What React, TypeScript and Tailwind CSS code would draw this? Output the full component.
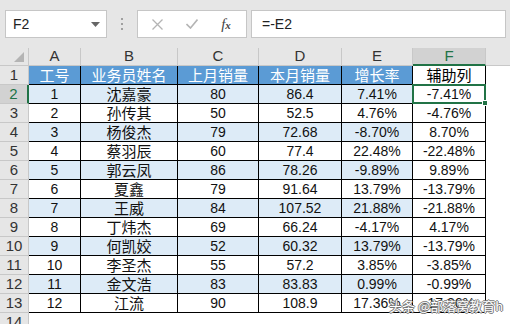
import React from "react";

const rows: [string, string, string, string, string, string][] = [
  ["1", "沈嘉豪", "80", "86.4", "7.41%", "-7.41%"],
  ["2", "孙传其", "50", "52.5", "4.76%", "-4.76%"],
  ["3", "杨俊杰", "79", "72.68", "-8.70%", "8.70%"],
  ["4", "蔡羽辰", "60", "77.4", "22.48%", "-22.48%"],
  ["5", "郭云凤", "86", "78.26", "-9.89%", "9.89%"],
  ["6", "夏鑫", "79", "91.64", "13.79%", "-13.79%"],
  ["7", "王威", "84", "107.52", "21.88%", "-21.88%"],
  ["8", "丁炜杰", "69", "66.24", "-4.17%", "4.17%"],
  ["9", "何凯姣", "52", "60.32", "13.79%", "-13.79%"],
  ["10", "李圣杰", "55", "57.2", "3.85%", "-3.85%"],
  ["11", "金文浩", "83", "83.83", "0.99%", "-0.99%"],
  ["12", "江流", "90", "108.9", "17.36%", "-17.36%"],
];

const widths = ["w-[52px]", "w-[97px]", "w-[81px]", "w-[83px]", "w-[71px]", "w-[73px]"];
const letters = ["A", "B", "C", "D", "E", "F"];
const heads = ["工号", "业务员姓名", "上月销量", "本月销量", "增长率", "辅助列"];

export default function App() {
  return (
    <div className="relative w-[510px] h-[324px] overflow-hidden bg-white font-['Liberation_Sans','Noto_Sans_CJK_SC',sans-serif] text-black">
      {/* formula bar */}
      <div className="h-[48px] bg-[#e6e6e6] flex items-start pt-[10px] pl-[5px]">
        <div className="w-[102px] h-[28px] bg-white border border-[#c6c6c6] flex items-center justify-between pl-[7px] pr-[6px]">
          <span className="text-[14px] text-[#222]">F2</span>
          <svg width="9" height="5" viewBox="0 0 9 5">
            <path d="M0 0 L9 0 L4.5 5 Z" fill="#666" />
          </svg>
        </div>
        <div className="w-[30px] h-[28px] flex flex-col items-center justify-center gap-[3px]">
          <div className="w-[2px] h-[2px] bg-[#a0a0a0]" />
          <div className="w-[2px] h-[2px] bg-[#a0a0a0]" />
          <div className="w-[2px] h-[2px] bg-[#a0a0a0]" />
        </div>
        <div className="w-[110px] h-[28px] bg-white border border-[#c6c6c6] flex items-center">
          <div className="w-[38px] flex justify-center">
            <svg width="11" height="11" viewBox="0 0 11 11">
              <path d="M0.5 0.5 L10.5 10.5 M10.5 0.5 L0.5 10.5" stroke="#b4b4b4" strokeWidth="1.3" />
            </svg>
          </div>
          <div className="w-[32px] flex justify-center">
            <svg width="12" height="10" viewBox="0 0 12 10">
              <path d="M0.5 5 L4.5 9 L11.5 0.5" stroke="#b4b4b4" strokeWidth="1.6" fill="none" />
            </svg>
          </div>
          <div className="flex-1 flex justify-center pr-[2px]">
            <span className="font-['Liberation_Serif',serif] italic text-[15px] text-[#444] leading-none">
              f<span className="text-[11px] font-bold">x</span>
            </span>
          </div>
        </div>
        <div className="ml-[4px] w-[255px] h-[28px] bg-white border border-[#c6c6c6] flex items-center pl-[10px]">
          <span className="text-[14px] text-[#222]">=-E2</span>
        </div>
      </div>

      {/* column headers */}
      <div className="flex h-[18px] bg-[#e6e6e6]">
        <div className="relative w-[29px] border-r border-b border-[#c8c8c8]">
          <svg className="absolute right-[4px] bottom-[3px]" width="10" height="10" viewBox="0 0 10 10">
            <path d="M10 0 L10 10 L0 10 Z" fill="#b4b4b4" />
          </svg>
        </div>
        {letters.map((l, i) =>
          i === 5 ? (
            <div
              key={l}
              className={`${widths[i]} bg-[#d2d2d2] border-r border-[#c8c8c8] border-b-2 border-b-[#217346] flex items-center justify-center text-[15px] text-[#217346]`}
            >
              {l}
            </div>
          ) : (
            <div
              key={l}
              className={`${widths[i]} border-r border-b border-[#c8c8c8] flex items-center justify-center text-[15px] text-[#333]`}
            >
              {l}
            </div>
          )
        )}
        <div className="flex-1 border-b border-[#c8c8c8]" />
      </div>

      {/* row 1 */}
      <div className="flex h-[19px]">
        <div className="w-[29px] bg-[#e6e6e6] border-r border-b border-[#c8c8c8] flex items-center justify-center text-[15px] text-[#333]">
          1
        </div>
        {heads.map((h, i) => (
          <div
            key={h}
            className={`${widths[i]} border-r border-b border-black flex items-center justify-center text-[15px] font-['Noto_Sans_CJK_SC',sans-serif] ${
              i === 5 ? "bg-white text-black" : "bg-[#5b9bd5] text-white"
            }`}
          >
            {h}
          </div>
        ))}
        <div className="flex-1" />
      </div>

      {/* data rows */}
      {rows.map((r, ri) => {
        const blue = ri % 2 === 0;
        const sel = ri === 0;
        return (
          <div key={ri} className="flex h-[19px]">
            <div
              className={`w-[29px] border-b border-[#c8c8c8] flex items-center justify-center text-[15px] ${
                sel
                  ? "bg-[#d2d2d2] text-[#217346] border-r-2 border-r-[#217346]"
                  : "bg-[#e6e6e6] text-[#333] border-r"
              }`}
            >
              {ri + 2}
            </div>
            {r.map((v, ci) => (
              <div
                key={ci}
                className={`${widths[ci]} relative border-r border-b border-black flex items-center justify-center ${
                  ci === 1 ? "text-[15px] font-['Noto_Sans_CJK_SC',sans-serif]" : "text-[14px]"
                } ${blue && ci < 5 ? "bg-[#ddebf7]" : "bg-white"} text-[#111]`}
              >
                {v}
                {sel && ci === 5 && (
                  <div className="absolute -top-px -left-px -right-px -bottom-px border-2 border-[#217346] z-10">
                    <div className="absolute -right-[4px] -bottom-[4px] w-[6px] h-[6px] bg-[#217346] border border-white" />
                  </div>
                )}
              </div>
            ))}
            <div className="flex-1" />
          </div>
        );
      })}

      {/* row 14 */}
      <div className="flex h-[19px]">
        <div className="w-[29px] bg-[#e6e6e6] border-r border-b border-[#c8c8c8] flex items-center justify-center text-[15px] text-[#333]">
          14
        </div>
        <div className="flex-1" />
      </div>

      {/* watermark */}
      <div className="absolute left-[389px] top-[297px] text-[13px] leading-[18px] text-white font-['Noto_Sans_CJK_SC',sans-serif] [text-shadow:1px_0_0_#777,-1px_0_0_#777,0_1px_0_#777,0_-1px_0_#777] whitespace-nowrap">
        头条 @部落窝教育h
      </div>
    </div>
  );
}
